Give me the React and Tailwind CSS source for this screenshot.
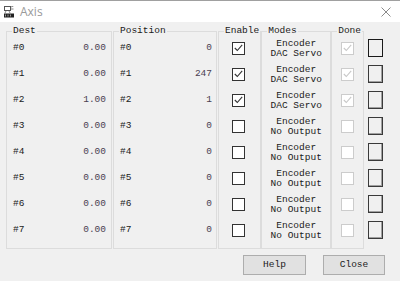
const rows = [
  { dest: "0.00", pos: "0", on: true, mode: "DAC Servo" },
  { dest: "0.00", pos: "247", on: true, mode: "DAC Servo" },
  { dest: "1.00", pos: "1", on: true, mode: "DAC Servo" },
  { dest: "0.00", pos: "0", on: false, mode: "No Output" },
  { dest: "0.00", pos: "0", on: false, mode: "No Output" },
  { dest: "0.00", pos: "0", on: false, mode: "No Output" },
  { dest: "0.00", pos: "0", on: false, mode: "No Output" },
  { dest: "0.00", pos: "0", on: false, mode: "No Output" },
];

const mono = "font-['Liberation_Mono','Courier_New',monospace] text-[9.5px] leading-[10px] text-[#1a1a1a]";

function Check({ checked, disabled }) {
  const box = disabled ? "border-[#cccccc] bg-white" : "border-[#333333] bg-white";
  const tick = disabled ? "#c8c8c8" : "#333333";
  return (
    <span className={`flex h-[13px] w-[13px] items-center justify-center border ${box}`}>
      {checked && (
        <svg width="9" height="8" viewBox="0 0 9 8">
          <path d="M0.8 4 L3.3 6.5 L8.2 0.8" fill="none" stroke={tick} strokeWidth="1.1" />
        </svg>
      )}
    </span>
  );
}

function Group({ title, className, children }) {
  return (
    <fieldset className={`border border-[#dcdcdc] pb-[5px] ${className}`}>
      <legend className={`ml-[5px] px-[1px] ${mono}`}>{title}</legend>
      <div className="-mt-[1px] flex flex-col">{children}</div>
    </fieldset>
  );
}

function Row({ className = "", children }) {
  return <div className={`flex h-[26px] items-center ${className}`}>{children}</div>;
}

export default function App() {
  return (
    <div className="flex h-[281px] w-[400px] flex-col overflow-hidden bg-[#f0f0f0]">
      <div className="flex h-[22px] items-center border-t border-[#a0a0a0] bg-white pl-[4px] pr-[9px]">
        <svg width="10" height="12" viewBox="0 0 10 12" className="shrink-0">
          <rect x="0.5" y="0.5" width="6" height="4" fill="none" stroke="#555" />
          <path d="M7 1 L9.5 0 M7 3 L9.5 3 M2 5 L1 7 M5 5 L6 7" stroke="#666" strokeWidth="0.8" />
          <rect x="0" y="7.5" width="10" height="4" fill="#222" />
          <path d="M1.5 8.5 V10.5 M4 8.5 V10.5 M6.5 8.5 V10.5" stroke="#bbb" strokeWidth="0.8" />
        </svg>
        <span className="ml-[6px] font-['Open_Sans',sans-serif] text-[12px] text-[#9a9a9a]">Axis</span>
        <svg width="10" height="10" viewBox="0 0 10 10" className="ml-auto">
          <path d="M0.5 0.5 L9.5 9.5 M9.5 0.5 L0.5 9.5" stroke="#8a8a8a" strokeWidth="1" />
        </svg>
      </div>

      <div className="flex items-start pl-[6px] pt-[4px]">
        <Group title="Dest" className="w-[106px]">
          {rows.map((r, i) => (
            <Row key={i} className={`justify-between pl-[6px] pr-[5px] ${mono}`}>
              <span>#{i}</span>
              <span className="text-[#4a4050]">{r.dest}</span>
            </Row>
          ))}
        </Group>
        <Group title="Position" className="ml-[1px] w-[104px]">
          {rows.map((r, i) => (
            <Row key={i} className={`justify-between pl-[6px] pr-[4px] ${mono}`}>
              <span>#{i}</span>
              <span className="text-[#4a4050]">{r.pos}</span>
            </Row>
          ))}
        </Group>
        <Group title="Enable" className="ml-[1px] w-[42px]">
          {rows.map((r, i) => (
            <Row key={i} className="justify-center pr-[2px]">
              <Check checked={r.on} />
            </Row>
          ))}
        </Group>
        <Group title="Modes" className="w-[70px]">
          {rows.map((r, i) => (
            <Row key={i} className={`flex-col justify-center pt-[1px] text-center ${mono}`}>
              <span>Encoder</span>
              <span>{r.mode}</span>
            </Row>
          ))}
        </Group>
        <Group title="Done" className="w-[33px]">
          {rows.map((r, i) => (
            <Row key={i} className="justify-center">
              <Check checked={r.on} disabled />
            </Row>
          ))}
        </Group>
        <div className="ml-[4px] flex flex-col pt-[9px]">
          {rows.map((r, i) => (
            <Row key={i}>
              <span
                className={`h-[18px] w-[15px] border ${
                  i === 0 ? "border-[#1a1a1a]" : "border-[#3a3a3a] shadow-[inset_-1px_-1px_0_#a0a0a0]"
                } bg-[#f0f0f0]`}
              />
            </Row>
          ))}
        </div>
      </div>

      <div className="mt-[6px] flex justify-end gap-[17px] pr-[15px]">
        <button className={`h-[20px] w-[63px] border border-[#adadad] bg-[#e1e1e1] ${mono}`}>Help</button>
        <button className={`h-[20px] w-[62px] border border-[#adadad] bg-[#e1e1e1] ${mono}`}>Close</button>
      </div>
    </div>
  );
}
